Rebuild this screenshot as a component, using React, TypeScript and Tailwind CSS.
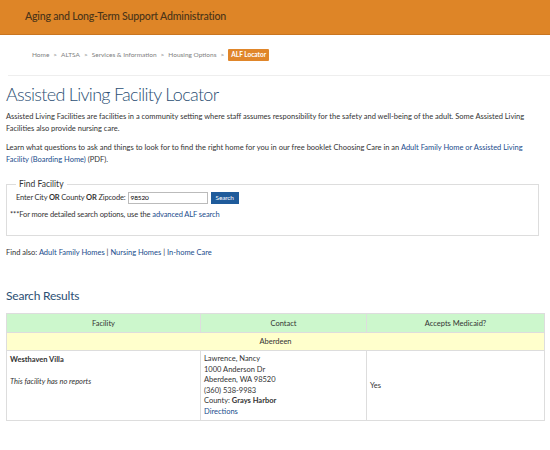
import React from 'react';

const font = { fontFamily: 'Lato, "Open Sans", sans-serif' };

export default function App() {
  return (
    <div className="w-[550px] h-[450px] bg-white overflow-hidden text-[#333]" style={font}>
      {/* Header */}
      <div className="h-[35px] bg-[#de8527] border-b border-[#c97520] flex items-center pl-[25px]">
        <span className="text-[10.6px] text-[#4a3418] font-medium tracking-[-0.2px]">Aging and Long-Term Support Administration</span>
      </div>

      {/* Breadcrumb */}
      <div className="h-[41px] flex items-center pl-[24px] text-[6.5px] text-[#808080] gap-[4px] border-b border-[#eee] ml-[8px]">
        <span>Home</span>
        <span>&gt;</span>
        <span>ALTSA</span>
        <span>&gt;</span>
        <span>Services &amp; Information</span>
        <span>&gt;</span>
        <span>Housing Options</span>
        <span>&gt;</span>
        <span className="bg-[#e0862a] text-white font-bold px-[3px] py-[1.5px] rounded-[1px]">ALF Locator</span>
      </div>

      <div className="px-[6px]">
        <h1 className="text-[18px] font-light text-[#2c4f74] mt-[6px] leading-[24px] tracking-[-0.7px]">Assisted Living Facility Locator</h1>

        <p className="text-[7.5px] leading-[12px] mt-[5px] text-[#333]">
          Assisted Living Facilities are facilities in a community setting where staff assumes responsibility for the safety and well-being of the adult. Some Assisted Living Facilities also provide nursing care.
        </p>
        <p className="text-[7.5px] leading-[12px] mt-[7px] text-[#333]">
          Learn what questions to ask and things to look for to find the right home for you in our free booklet Choosing Care in an{' '}
          <a className="text-[#1a4c8c]">Adult Family Home or Assisted Living</a>
          <br />
          <a className="text-[#1a4c8c]">Facility (Boarding Home)</a> (PDF).
        </p>

        {/* Find facility */}
        <fieldset className="border border-[#ddd] mt-[12px] mr-[5px] h-[58px] px-[9px] pb-[6px]">
          <legend className="text-[8.5px] px-[3px] text-[#333]">Find Facility</legend>
          <div className="flex items-center text-[7.5px] mt-[1px] tracking-[-0.15px]">
            <span>Enter City <b>OR</b> County <b>OR</b> Zipcode:</span>
            <div className="ml-[2px] w-[80px] h-[12px] border border-[#bbb] text-[6.5px] leading-[10px] pl-[2px] text-black">98520</div>
            <div className="ml-[3px] h-[12px] px-[5px] bg-[#1f5b9b] text-white text-[6.5px] leading-[12px]">Search</div>
          </div>
          <div className="text-[7.5px] mt-[5px] -ml-[6px] tracking-[-0.1px]">
            ***For more detailed search options, use the <a className="text-[#1a4c8c]">advanced ALF search</a>
          </div>
        </fieldset>

        <div className="text-[7.5px] mt-[11px]">
          Find also: <a className="text-[#1a4c8c]">Adult Family Homes</a> | <a className="text-[#1a4c8c]">Nursing Homes</a> | <a className="text-[#1a4c8c]">In-home Care</a>
        </div>

        <h2 className="text-[12px] text-[#2c4f74] mt-[30px] leading-[16px] tracking-[-0.2px]">Search Results</h2>

        {/* Table */}
        <table className="mt-[9px] w-[539px] border-collapse text-[7.5px]">
          <thead>
            <tr className="bg-[#ccf7cc] h-[19px]">
              <th className="font-normal border border-[#ddd] w-[194px]">Facility</th>
              <th className="font-normal border border-[#ddd] w-[166px]">Contact</th>
              <th className="font-normal border border-[#ddd]">Accepts Medicaid?</th>
            </tr>
          </thead>
          <tbody>
            <tr className="bg-[#ffffcc] h-[18px]">
              <td colSpan={3} className="text-center border border-[#ddd]">Aberdeen</td>
            </tr>
            <tr className="align-middle">
              <td className="border border-[#ddd] align-top px-[3px] pt-[3px]">
                <div className="font-bold">Westhaven Villa</div>
                <div className="italic mt-[10px]">This facility has no reports</div>
              </td>
              <td className="border border-[#ddd] px-[3px] pt-[3px] pb-[3px] leading-[10.5px]">
                <div>Lawrence, Nancy</div>
                <div>1000 Anderson Dr</div>
                <div>Aberdeen, WA 98520</div>
                <div>(360) 538-9983</div>
                <div>County: <b>Grays Harbor</b></div>
                <div className="text-[#1a4c8c]">Directions</div>
              </td>
              <td className="border border-[#ddd] px-[3px]">Yes</td>
            </tr>
          </tbody>
        </table>
      </div>
    </div>
  );
}
